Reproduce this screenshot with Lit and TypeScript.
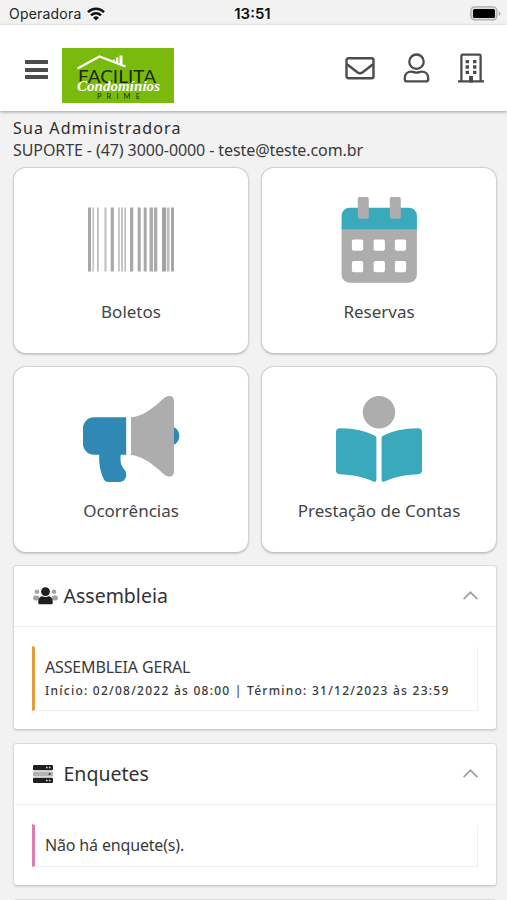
import { LitElement, html, svg, css } from "lit";
import { customElement, property } from "lit/decorators.js";

const wifi = svg`<svg class="wifi" width="18" height="14" viewBox="0 0 18 14" fill="none" stroke="#111" stroke-width="2.5">
  <path d="M1 5.2C5.4.6 12.6.6 17 5.2"/><path d="M4 8.4c2.8-2.8 7.200-2.800 10 0"/><path d="M9 13.600l-2.900-2.900a4.100 4.100 0 0 1 5.800 0z" fill="#111" stroke="none"/></svg>`;

const battery = svg`<svg width="31" height="15" viewBox="0 0 31 15">
  <rect x=".9" y=".9" width="26" height="13" rx="3.800" fill="#ddd" stroke="#aaa" stroke-width="1.300"/>
  <rect x="3" y="3" width="22" height="9" rx="1.600" fill="#000"/><path d="M28.700 5.200c2.400.8 2.400 3.800 0 4.600z" fill="#aaa"/></svg>`;

const logo = svg`<svg class="logo" width="112" height="55" viewBox="0 0 112 55">
  <rect width="112" height="55" fill="#7aba0c"/>
  <path d="M15.500 20.500 37.500 8.500 63.500 18.500" fill="none" stroke="#fff" stroke-width="2.200"/>
  <path d="M51 11.500h1.800v3.200L51 14zM54 9.500h2.300v6.300l-2.300-.9zM57.500 7.500h3v9.800l-3-1.200z" fill="#fff"/>
  <text x="16" y="34.500" class="l1" textLength="78" lengthAdjust="spacingAndGlyphs">FACILITA</text>
  <text x="15" y="42.500" class="l2" textLength="83" lengthAdjust="spacingAndGlyphs">Condomínios</text>
  <text x="35" y="50.800" class="l3" textLength="43">PRIME</text></svg>`;

const mail = svg`<svg width="30" height="23" viewBox="0 0 30 23" fill="none" stroke="#4c4c4c" stroke-width="2.400" stroke-linejoin="round">
  <rect x="1.500" y="1.300" width="27" height="20" rx="2"/><path d="M2 7.200 12.300 15.200q2.700 2 5.400 0L28 7.200"/></svg>`;

const person = svg`<svg width="27" height="30" viewBox="0 0 27 30" fill="none" stroke="#4c4c4c" stroke-width="2.300">
  <circle cx="13.500" cy="8.700" r="7.200"/><path d="M8.500 18.600c2 0 2.500 1 5 1s3-1 5-1c4 0 6.700 2.700 6.700 6.300v1.300q0 2.200-2.200 2.200H4q-2.200 0-2.200-2.200v-1.300c0-3.600 2.700-6.300 6.700-6.300z"/></svg>`;

const building = svg`<svg width="26" height="30" viewBox="0 0 26 30" fill="none" stroke="#4c4c4c" stroke-width="2.300">
  <path d="M0 28.300h26M3.400 28V2.800q0-1.200 1.200-1.200h16.800q1.200 0 1.200 1.200V28"/>
  <path d="M11.600 29v-5.500h2.800V29z" fill="#4c4c4c" stroke-width="1.200"/>
  <path d="M7.600 8.700h3.400m4 0h3.400M7.600 14h3.400m4 0h3.400M7.600 19.300h3.400m4 0h3.400" stroke-width="3.300"/></svg>`;

const bars: [number, number, string][] = [
  [0, 3, "#a6a6a6"], [4.3, 1.8, "#c6c6c6"], [9, 1.800, "#bcbcbc"], [16.500, 2, "#bcbcbc"], [22.700, 3.200, "#a9a9a9"],
  [30, 1.800, "#c4c4c4"], [33, 2, "#c4c4c4"], [36.400, 1.500, "#b8b8b8"], [42, 3.300, "#a9a9a9"], [49.700, 3, "#a9a9a9"],
  [55.700, 3, "#a9a9a9"], [61.500, 3.500, "#ababab"], [66, 3.300, "#a9a9a9"], [74, 4.200, "#a3a3a3"], [79, 2.500, "#bcbcbc"], [83, 3, "#a6a6a6"],
];

const barcode = svg`<svg width="86" height="86" viewBox="0 0 86 86">${bars.map(
  ([x, w, c]) => svg`<rect x=${x} y="10.500" width=${w} height="64" fill=${c}/>`)}</svg>`;

const calendar = svg`<svg width="76" height="86" viewBox="-.6 .3 76 86">
  <path d="M0 32h75.300v46a8 8 0 0 1-8 8H8a8 8 0 0 1-8-8z" fill="#adadad"/>
  <path d="M0 32.500V19a8 8 0 0 1 8-8h59.300a8 8 0 0 1 8 8v13.500z" fill="#3aa9bb"/>
  <g fill="#adadad"><rect x="16.200" y="0" width="11" height="22" rx="2.500"/><rect x="48.200" y="0" width="11" height="22" rx="2.500"/></g>
  <g fill="#fff">${[10.3, 32, 53.2].map((x) => [42.700, 64.200].map((y) => svg`<rect x=${x} y=${y} width="11.300" height="11.300" rx="1.800"/>`))}</g></svg>`;

const megaphone = svg`<svg width="97" height="86" viewBox="0 0 97 86">
  <path d="M88 30.500c4 0 8.300 4 8.300 9.500s-4.300 9.500-8.300 9.500z" fill="#3089b4"/>
  <path d="M11 21.300h32.200v37.500H37.700c-.6 6 0 10.700 4 15.300 4 4.800 0 11.900-4.500 11.900H25.500c-2.300 0-4-1-5-3.200-3.300-7.400-4.800-15-4.300-24H11a11 11 0 0 1-11-11V32.300a11 11 0 0 1 11-11z" fill="#3089b4"/>
  <path d="M48 21.300C58.500 20.300 67 15 80 3c3-2.800 5-3 6.500-3 3 0 4.500 2 4.500 5v70.500c0 3-1.500 5-4.500 5-1.500 0-3.500-.2-6.500-3C67 65.500 58.500 60 48 59z" fill="#adadad"/></svg>`;

const reader = svg`<svg width="86" height="86" viewBox="0 0 86 86">
  <circle cx="43" cy="16.200" r="16.200" fill="#adadad"/>
  <g fill="#3aa9bb"><path d="M4 32.200c14 0 27 3 35 7.500q1.400.9 1.400 2.700V84q0 2.200-2.400 1.700C27 80.300 16 78.800 3.600 78.200Q0 77.800 0 74.500V36q0-3.500 4-3.800z"/>
  <path d="M82 32.200c-14 0-27 3-35 7.500q-1.400.9-1.400 2.700V84q0 2.200 2.400 1.700c11-5.400 22-6.900 34.400-7.500q3.600-.4 3.600-3.700V36q0-3.500-4-3.800z"/></g></svg>`;

const people = svg`<svg width="25" height="18" viewBox="0 0 25 18">
  <g fill="#a3a3a3"><circle cx="4" cy="4.800" r="2.300"/><circle cx="21" cy="4.800" r="2.300"/><rect x="0" y="8.500" width="6.500" height="5" rx="2.500"/><rect x="18.500" y="8.500" width="6.500" height="5" rx="2.500"/></g>
  <circle cx="12.500" cy="4.600" r="4.400" fill="#1f1f1f"/><path d="M5.200 15.500c0-4 1.800-6.300 4.300-6.300.9 0 1.500.8 3 .8s2.100-.8 3-.8c2.500 0 4.300 2.300 4.300 6.300 0 1.300-.6 1.800-1.600 1.800H6.800c-1 0-1.600-.5-1.600-1.800z" fill="#1f1f1f"/></svg>`;

const server = svg`<svg width="20" height="18" viewBox="0 0 20 18">
  <rect width="20" height="5.200" rx="1.300" fill="#1f1f1f"/><rect y="6.500" width="20" height="5" rx=".8" fill="#b3b3b3"/><rect y="12.800" width="20" height="5.200" rx="1.300" fill="#1f1f1f"/>
  <path d="M13 2.600h1.600m1.300 0h1.600M13 15.400h1.600m1.300 0h1.600" stroke="#ddd" stroke-width="1.500"/><path d="M15.700 9h1.800" stroke="#333" stroke-width="1.800"/></svg>`;

const chevron = svg`<svg class="chev" width="15" height="9" viewBox="0 0 15 9" fill="none" stroke="#a0a0a0" stroke-width="1.700"><path d="M.6 8.200 7.500 1.300l6.900 6.900"/></svg>`;

@customElement("menu-tile")
class MenuTile extends LitElement {
  @property() label = "";
  static styles = css`
    :host { box-sizing: border-box; display: flex; flex-direction: column; align-items: center; height: 187px; padding-top: 29px;
      background: #fff; border: 1px solid #d2d2d2; border-bottom-color: #c4c4c4; border-radius: 13px; box-shadow: 0 1px 2px rgba(0,0,0,.17); }
    .label { margin-top: 16px; font-size: 17px; line-height: 26px; color: #444; white-space: nowrap; }
    .icon { height: 86px; display: flex; }
  `;
  render() {
    return html`<div class="icon"><slot></slot></div><div class="label">${this.label}</div>`;
  }
}

@customElement("info-panel")
class InfoPanel extends LitElement {
  @property() heading = "";
  static styles = css`
    :host { box-sizing: border-box; display: block; background: #fff; border: 1px solid #dcdcdc; border-bottom-color: #cfcfcf;
      border-radius: 4px; box-shadow: 0 1px 2px rgba(0,0,0,.12); }
    .head { box-sizing: border-box; height: 61px; display: flex; align-items: center; padding: 0 18px 0 18.500px; border-bottom: 1px solid #f0f0f0; }
    .icon { width: 31px; display: flex; }
    .title { flex: 1; font-size: 19.500px; line-height: 28px; color: #333; }
    .chev { margin-bottom: 2px; }
    .body { padding: 19px 18px 18px; }
  `;
  render() {
    return html`<div class="head"><div class="icon"><slot name="icon"></slot></div><div class="title">${this.heading}</div>${chevron}</div>
      <div class="body"><slot></slot></div>`;
  }
}

@customElement("app-root")
class AppRoot extends LitElement {
  static styles = css`
    :host { display: block; height: 900px; overflow: hidden; background: #f2f2f2; color: #3a3a3a; font-family: "Noto Sans", "Open Sans", sans-serif; }
    svg { display: block; }
    .status { height: 25px; display: grid; grid-template-columns: 1fr auto 1fr; align-items: center; padding: 1px 6px 0 9px;
      box-sizing: border-box; font: 14px/20px Inter, sans-serif; color: #222; }
    .carrier { display: flex; align-items: center; gap: 6px; padding-top: 2px; letter-spacing: .2px; }
    .time { font-weight: 600; font-size: 15px; color: #111; padding: 2px 5px 0 0; }
    .power { justify-self: end; }
    .bar { position: relative; height: 86px; box-sizing: border-box; display: flex; align-items: center; background: #fff; padding: 0 23px 0 25px;
      box-shadow: 0 1px 3px rgba(0,0,0,.35); }
    .burger { width: 22.500px; display: grid; gap: 3.500px; margin: 3px 14.500px 0 0; }
    .burger i { height: 4px; background: #4c4c4c; border-radius: .5px; }
    .logo { margin-top: 15px; }
    .l1 { font: 18px Lato, sans-serif; fill: #1c2a08; }
    .l2 { font: italic 700 14.500px "Liberation Serif", serif; fill: #fff; }
    .l3 { font: 7.500px Lato, sans-serif; fill: #1c3005; }
    .actions { margin-left: auto; display: flex; align-items: center; gap: 28px; }
    .contact { padding: 6px 13px 0; height: 56px; box-sizing: border-box; white-space: nowrap; }
    .owner { font-size: 16px; line-height: 22px; letter-spacing: 1.120px; color: #2c2c2c; }
    .detail { font-size: 16px; line-height: 22px; letter-spacing: -.09px; }
    .tiles { display: grid; grid-template-columns: 236px 236px; gap: 12px; padding: 0 10px 0 13px; }
    .panels { display: grid; gap: 13px; padding: 12px 10px 0 13px; }
    .note { box-sizing: border-box; border: 1px solid #f0f0f0; border-top-color: transparent; border-left: 3px solid #e59a3c; padding: 8px 9px 0 10px; white-space: nowrap; }
    .meeting { height: 65px; }
    .poll { height: 43px; border-left-color: #dc7caf; }
    .name { font-size: 16px; line-height: 25px; letter-spacing: -.16px; }
    .dates { font-size: 12px; line-height: 21px; letter-spacing: 1.250px; font-weight: 500; }
  `;
  render() {
    return html`
      <div class="status"><div class="carrier">Operadora ${wifi}</div><div class="time">13:51</div><div class="power">${battery}</div></div>
      <div class="bar"><div class="burger"><i></i><i></i><i></i></div>${logo}<div class="actions">${mail}${person}${building}</div></div>
      <div class="contact"><div class="owner">Sua Administradora</div><div class="detail">SUPORTE - (47) 3000-0000 - teste@teste.com.br</div></div>
      <div class="tiles">
        <menu-tile label="Boletos">${barcode}</menu-tile>
        <menu-tile label="Reservas">${calendar}</menu-tile>
        <menu-tile label="Ocorrências">${megaphone}</menu-tile>
        <menu-tile label="Prestação de Contas">${reader}</menu-tile>
      </div>
      <div class="panels">
        <info-panel heading="Assembleia"><span slot="icon">${people}</span>
          <div class="note meeting"><div class="name">ASSEMBLEIA GERAL</div><div class="dates">Início: 02/08/2022 às 08:00 | Término: 31/12/2023 às 23:59</div></div></info-panel>
        <info-panel heading="Enquetes"><span slot="icon">${server}</span>
          <div class="note poll"><div class="name">Não há enquete(s).</div></div></info-panel>
        <info-panel></info-panel>
      </div>`;
  }
}
